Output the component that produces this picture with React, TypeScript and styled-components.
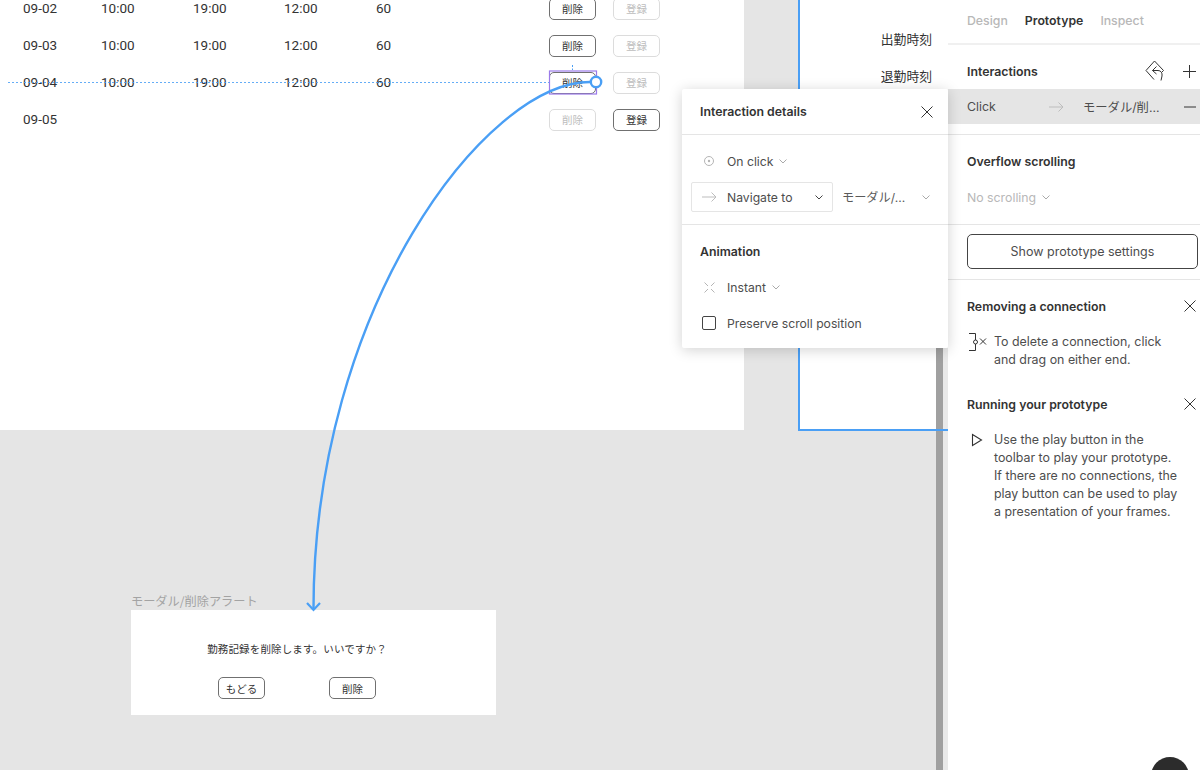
import React from "react";
import styled, { createGlobalStyle } from "styled-components";

const BLUE = "#4a9ff5";

const GlobalStyle = createGlobalStyle`
  html, body {
    margin: 0;
    padding: 0;
    background: #e5e5e5;
    overflow: hidden;
  }
  * {
    box-sizing: border-box;
  }
`;

// PAGE
const Page = styled.div`
  position: relative;
  width: 1200px;
  height: 770px;
  overflow: hidden;
  display: grid;
  grid-template-columns: 948px 252px;
  font-family: Inter, "Noto Sans CJK JP", sans-serif;
  font-size: 12.3px;
  color: #333;
`;

const Canvas = styled.div`
  position: relative;
  background: #e5e5e5;
  overflow: hidden;
`;

// FRAMES ON THE CANVAS
const TableFrame = styled.div`
  position: absolute;
  left: 0;
  top: -11px;
  width: 744px;
  height: 441px;
  background: #fff;
`;

const Row = styled.div`
  display: grid;
  grid-template-columns: 78px 92px 91px 92px 173px 47px 17px 47px;
  align-items: center;
  height: 37px;
  padding-left: 23px;
  font-family: Roboto, "Noto Sans CJK JP", sans-serif;
  font-size: 13.5px;
  color: #333;
`;

const FrameButton = styled.div<{ $off?: boolean }>`
  display: flex;
  align-items: center;
  justify-content: center;
  width: 47px;
  height: 22px;
  border-radius: 5px;
  background: #fff;
  border: 1px solid ${(p) => (p.$off ? "#dcdcdc" : "#707070")};
  color: ${(p) => (p.$off ? "#bdbdbd" : "#333")};
  font-family: "Noto Sans CJK JP", sans-serif;
  font-size: 10.5px;
`;

const RowButton = styled(FrameButton)`
  margin-top: 2px;
`;

const SideFrame = styled.div`
  position: absolute;
  left: 798px;
  top: -2px;
  width: 150px;
  height: 433px;
  padding: 22px 16px 0 0;
  background: #fff;
  border-left: 2px solid ${BLUE};
  border-bottom: 2px solid ${BLUE};
`;

const SideLabel = styled.div`
  height: 37px;
  line-height: 37px;
  text-align: right;
  font-family: "Noto Sans CJK JP", sans-serif;
  font-size: 12.8px;
  color: #333;
`;

const ModalLabel = styled.div`
  position: absolute;
  left: 131px;
  top: 592px;
  line-height: 18px;
  font-family: "Noto Sans CJK JP", sans-serif;
  font-size: 12.2px;
  color: #a3a3a3;
`;

const ModalFrame = styled.div`
  position: absolute;
  left: 131px;
  top: 610px;
  width: 365px;
  height: 105px;
  padding: 30px 33px 0 0;
  background: #fff;
  display: flex;
  flex-direction: column;
  align-items: center;
`;

const ModalText = styled.div`
  height: 18px;
  line-height: 18px;
  font-family: "Noto Sans CJK JP", sans-serif;
  font-size: 10.5px;
  letter-spacing: 0.15px;
  color: #333;
`;

const ModalButtons = styled.div`
  display: flex;
  gap: 64px;
  margin-top: 19px;
`;

const Wires = styled.svg`
  position: absolute;
  inset: 0;
  width: 948px;
  height: 770px;
  pointer-events: none;
`;

const ScrollBar = styled.div`
  position: absolute;
  right: 0;
  top: 348px;
  bottom: 0;
  width: 12px;
  border-right: 5px solid #e9e9e9;
  background: #a0a0a0;
`;

// INTERACTION POPUP
const Popup = styled.div`
  position: absolute;
  left: 682px;
  top: 89px;
  width: 266px;
  height: 259px;
  background: #fff;
  border-radius: 2px;
  font-size: 12.2px;
  box-shadow: 0 2px 14px rgba(0, 0, 0, 0.18);
`;

const PopupHead = styled.div`
  display: flex;
  align-items: center;
  justify-content: space-between;
  height: 46px;
  padding: 0 15px 0 18px;
  border-bottom: 1px solid #e5e5e5;
`;

const Title = styled.div`
  font-weight: 600;
  font-size: 12.3px;
  color: #333;
`;

const PopupSection = styled.div<{ $last?: boolean }>`
  display: flex;
  flex-direction: column;
  padding: ${(p) => (p.$last ? "17px 0 0" : "16px 0 0")};
  height: ${(p) => (p.$last ? "124px" : "90px")};
  border-bottom: ${(p) => (p.$last ? "none" : "1px solid #e5e5e5")};
`;

const OptionRow = styled.div<{ $gap?: number }>`
  display: flex;
  align-items: center;
  height: 20px;
  padding-left: 20px;
  margin-top: ${(p) => p.$gap ?? 0}px;
  color: #4d4d4d;
`;

const IconSlot = styled.span`
  display: inline-flex;
  align-items: center;
  justify-content: center;
  width: 14px;
  height: 14px;
  margin-right: 11px;
`;

const Chevron = styled.svg<{ $left?: number }>`
  width: 8px;
  height: 5px;
  margin-left: ${(p) => p.$left ?? 6}px;
  flex: none;
`;

const ActionRow = styled.div`
  display: flex;
  align-items: center;
  height: 30px;
  margin: 11px 0 0 9px;
`;

const SelectBox = styled.div`
  display: flex;
  align-items: center;
  width: 142px;
  height: 30px;
  padding: 0 9px 0 10px;
  border: 1px solid #e5e5e5;
  border-radius: 2px;
  color: #4d4d4d;
`;

const ArrowSlot = styled.span`
  display: inline-flex;
  width: 16px;
  margin-right: 9px;
`;

const Grow = styled.span`
  flex: 1;
`;

const TargetText = styled.div`
  display: flex;
  align-items: center;
  width: 97px;
  padding-left: 9px;
  color: #5a5a5a;
`;

const AnimationTitle = styled(Title)`
  height: 20px;
  line-height: 20px;
  padding-left: 18px;
`;

const CheckBox = styled.span`
  display: block;
  width: 14px;
  height: 14px;
  border: 1.3px solid #444;
  border-radius: 2px;
  margin-right: 11px;
`;

// SIDEBAR
const Sidebar = styled.aside`
  background: #fff;
  display: flex;
  flex-direction: column;
`;

const Tabs = styled.div`
  display: flex;
  align-items: center;
  gap: 17px;
  height: 45px;
  padding: 0 0 3px 19px;
  border-bottom: 2px solid #f0f0f0;
`;

const Tab = styled.div<{ $active?: boolean }>`
  font-weight: ${(p) => (p.$active ? 600 : 500)};
  color: ${(p) => (p.$active ? "#333" : "#b8b8b8")};
`;

const InteractionHead = styled.div`
  display: flex;
  align-items: center;
  justify-content: space-between;
  height: 44px;
  padding: 8px 4px 0 19px;
`;

const HeadIcons = styled.div`
  display: flex;
  align-items: center;
  gap: 18px;
`;

const InteractionRow = styled.div`
  display: flex;
  align-items: center;
  height: 35px;
  padding-left: 19px;
  background: #e5e5e5;
  color: #4d4d4d;
`;

const RowTrigger = styled.span`
  width: 82px;
`;

const RowTarget = styled.span`
  width: 101px;
  margin-left: 19px;
  white-space: nowrap;
`;

const Divider = styled.div<{ $top?: number }>`
  height: 1px;
  background: #e5e5e5;
  margin-top: ${(p) => p.$top ?? 0}px;
`;

const OverflowTitle = styled(Title)`
  height: 52px;
  line-height: 54px;
  padding-left: 19px;
`;

const ScrollOption = styled.div`
  display: flex;
  align-items: center;
  height: 20px;
  padding-left: 19px;
  margin-bottom: 17px;
  color: #b8b8b8;
`;

const SettingsWrap = styled.div`
  padding: 9px 2px 10px 19px;
`;

const SettingsButton = styled.div`
  display: flex;
  align-items: center;
  justify-content: center;
  height: 35px;
  border: 1px solid #444;
  border-radius: 5px;
  font-size: 12.5px;
  color: #4d4d4d;
`;

const HelpBlock = styled.div`
  padding: 8px 4px 9px 19px;
`;

const HelpHead = styled.div`
  display: flex;
  align-items: center;
  justify-content: space-between;
  height: 36px;
  margin-bottom: 9px;
`;

const HelpBody = styled.div`
  display: grid;
  grid-template-columns: 27px 1fr;
  line-height: 18px;
  font-size: 12.4px;
  color: #4d4d4d;
  padding-right: 8px;
`;

const HelpIcon = styled.span`
  display: flex;
  height: 18px;
  align-items: center;
`;

const HelpBubble = styled.div`
  position: absolute;
  left: 1151px;
  top: 757px;
  width: 38px;
  height: 38px;
  border-radius: 50%;
  background: #2c2c2c;
`;

type CloseProps = { size?: number };

function CloseIcon({ size = 12 }: CloseProps) {
  return (
    <svg width={size} height={size} viewBox="0 0 12 12">
      <path d="M0.5 0.5L11.5 11.5M11.5 0.5L0.5 11.5" stroke="#333" strokeWidth="1" fill="none" />
    </svg>
  );
}

function ChevronIcon({ left, color = "#aaa" }: { left?: number; color?: string }) {
  return (
    <Chevron $left={left} viewBox="0 0 8 5">
      <path d="M0.5 0.5L4 4L7.5 0.5" stroke={color} strokeWidth="1" fill="none" />
    </Chevron>
  );
}

function ArrowIcon() {
  return (
    <svg width="15" height="10" viewBox="0 0 15 10">
      <path d="M0 5H14M9.5 0.5L14 5L9.5 9.5" stroke="#bdbdbd" strokeWidth="1" fill="none" />
    </svg>
  );
}

type RecordRow = {
  date: string;
  times?: string[];
  registered: boolean;
};

const records: RecordRow[] = [
  { date: "09-02", times: ["10:00", "19:00", "12:00", "60"], registered: true },
  { date: "09-03", times: ["10:00", "19:00", "12:00", "60"], registered: true },
  { date: "09-04", times: ["10:00", "19:00", "12:00", "60"], registered: true },
  { date: "09-05", registered: false },
];

export default function App() {
  return (
    <Page>
      <GlobalStyle />
      <Canvas>
        <TableFrame>
          {records.map((r) => (
            <Row key={r.date}>
              <span>{r.date}</span>
              <span>{r.times?.[0]}</span>
              <span>{r.times?.[1]}</span>
              <span>{r.times?.[2]}</span>
              <span>{r.times?.[3]}</span>
              <RowButton $off={!r.registered}>削除</RowButton>
              <span />
              <RowButton $off={r.registered}>登録</RowButton>
            </Row>
          ))}
        </TableFrame>

        <SideFrame>
          <SideLabel>出勤時刻</SideLabel>
          <SideLabel>退勤時刻</SideLabel>
        </SideFrame>

        <ModalLabel>モーダル/削除アラート</ModalLabel>
        <ModalFrame>
          <ModalText>勤務記録を削除します。いいですか？</ModalText>
          <ModalButtons>
            <FrameButton>もどる</FrameButton>
            <FrameButton>削除</FrameButton>
          </ModalButtons>
        </ModalFrame>

        <ScrollBar />

        <Wires viewBox="0 0 948 770">
          <path d="M936 430H948" stroke={BLUE} strokeWidth="2" fill="none" />
          <path d="M8 82.5H549" stroke={BLUE} strokeWidth="1" strokeDasharray="2 2" opacity="0.85" fill="none" />
          <path d="M572.5 65V70" stroke={BLUE} strokeWidth="1" strokeDasharray="2 1.5" fill="none" />
          <rect x="549.5" y="71" width="47" height="23" fill="none" stroke="#9b7bea" strokeWidth="1.2" />
          <path d="M590 82C485 82 313.5 310 313.5 609" stroke={BLUE} strokeWidth="2.4" fill="none" />
          <path d="M307 603L313.5 610L320 603" stroke={BLUE} strokeWidth="2.2" fill="none" />
          <circle cx="596" cy="82" r="5.2" fill="#fff" stroke={BLUE} strokeWidth="2.4" />
        </Wires>
      </Canvas>

      <Sidebar>
        <Tabs>
          <Tab>Design</Tab>
          <Tab $active>Prototype</Tab>
          <Tab>Inspect</Tab>
        </Tabs>

        <InteractionHead>
          <Title>Interactions</Title>
          <HeadIcons>
            <svg width="20" height="22" viewBox="0 0 20 22">
              <path d="M9 19.5L1 10.5L9.5 1L18.5 10.5L17 12" stroke="#333" strokeWidth="1" fill="none" />
              <path d="M11.5 6.5L7.5 10.5L11.5 14M7.5 10.5H13C16 10.5 17.5 13 17 16L16 20.5" stroke="#333" strokeWidth="1" fill="none" />
            </svg>
            <svg width="13" height="13" viewBox="0 0 13 13">
              <path d="M6.5 0V13M0 6.5H13" stroke="#333" strokeWidth="1" fill="none" />
            </svg>
          </HeadIcons>
        </InteractionHead>

        <InteractionRow>
          <RowTrigger>Click</RowTrigger>
          <ArrowIcon />
          <RowTarget>モーダル/削...</RowTarget>
          <svg width="12" height="2" viewBox="0 0 12 2">
            <path d="M0 1H12" stroke="#333" strokeWidth="1" />
          </svg>
        </InteractionRow>
        <Divider $top={10} />

        <OverflowTitle>Overflow scrolling</OverflowTitle>
        <ScrollOption>
          No scrolling
          <ChevronIcon left={6} />
        </ScrollOption>
        <Divider />

        <SettingsWrap>
          <SettingsButton>Show prototype settings</SettingsButton>
        </SettingsWrap>
        <Divider />

        <HelpBlock>
          <HelpHead>
            <Title>Removing a connection</Title>
            <CloseIcon />
          </HelpHead>
          <HelpBody>
            <HelpIcon>
              <svg width="21" height="18" viewBox="0 0 21 18">
                <path d="M2 0.5H8.5V17.5H2" stroke="#333" strokeWidth="1" fill="none" />
                <circle cx="8.5" cy="9" r="2" fill="#fff" stroke="#333" strokeWidth="1" />
                <path d="M13 5.5L19 11.5M19 5.5L13 11.5" stroke="#333" strokeWidth="1" fill="none" />
              </svg>
            </HelpIcon>
            <span>
              To delete a connection, click
              <br />
              and drag on either end.
            </span>
          </HelpBody>
        </HelpBlock>

        <HelpBlock>
          <HelpHead>
            <Title>Running your prototype</Title>
            <CloseIcon />
          </HelpHead>
          <HelpBody>
            <HelpIcon>
              <svg width="16" height="14" viewBox="0 0 16 14">
                <path d="M5.5 1.5L14.5 7L5.5 12.5Z" stroke="#333" strokeWidth="1.1" fill="none" />
              </svg>
            </HelpIcon>
            <span>
              Use the play button in the
              <br />
              toolbar to play your prototype.
              <br />
              If there are no connections, the
              <br />
              play button can be used to play
              <br />a presentation of your frames.
            </span>
          </HelpBody>
        </HelpBlock>
      </Sidebar>

      <Popup>
        <PopupHead>
          <Title>Interaction details</Title>
          <CloseIcon />
        </PopupHead>
        <PopupSection>
          <OptionRow>
            <IconSlot>
              <svg width="12" height="12" viewBox="0 0 12 12">
                <circle cx="6" cy="6" r="4.5" stroke="#b5b5b5" strokeWidth="1" fill="none" />
                <circle cx="6" cy="6" r="1.2" fill="#b5b5b5" />
              </svg>
            </IconSlot>
            On click
            <ChevronIcon />
          </OptionRow>
          <ActionRow>
            <SelectBox>
              <ArrowSlot>
                <ArrowIcon />
              </ArrowSlot>
              Navigate to
              <Grow />
              <ChevronIcon color="#444" />
            </SelectBox>
            <TargetText>
              モーダル/...
              <Grow />
              <ChevronIcon />
            </TargetText>
          </ActionRow>
        </PopupSection>
        <PopupSection $last>
          <AnimationTitle>Animation</AnimationTitle>
          <OptionRow $gap={15}>
            <IconSlot>
              <svg width="11" height="11" viewBox="0 0 11 11">
                <path d="M0.5 0.5L4 4M10.5 0.5L7 4M0.5 10.5L4 7M10.5 10.5L7 7" stroke="#b5b5b5" strokeWidth="1" fill="none" />
              </svg>
            </IconSlot>
            Instant
            <ChevronIcon />
          </OptionRow>
          <OptionRow $gap={16}>
            <CheckBox />
            Preserve scroll position
          </OptionRow>
        </PopupSection>
      </Popup>

      <HelpBubble />
    </Page>
  );
}
